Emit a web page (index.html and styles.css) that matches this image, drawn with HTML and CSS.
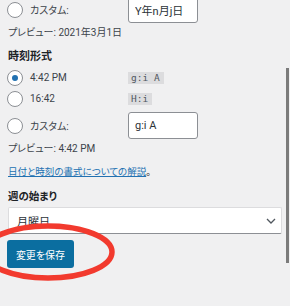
FILE: index.html
```html
<!DOCTYPE html>
<html lang="ja">
<head>
  <meta charset="UTF-8">
  <meta name="viewport" content="width=device-width, initial-scale=1.0">
  <title>一般設定</title>
  <link rel="stylesheet" href="styles.css">
</head>
<body>
  <div class="wrap">
    <div class="opt">
      <label class="choice"><span class="radio"></span>カスタム:</label>
      <input class="custom" type="text" value="Y年n月j日">
    </div>
    <p class="preview">プレビュー: 2021年3月1日</p>

    <h2 class="legend">時刻形式</h2>
    <div class="opt first">
      <label class="choice"><span class="radio checked"></span>4:42 PM</label>
      <code>g:i A</code>
    </div>
    <div class="opt">
      <label class="choice"><span class="radio"></span>16:42</label>
      <code>H:i</code>
    </div>
    <div class="opt custom-row">
      <label class="choice"><span class="radio"></span>カスタム:</label>
      <input class="custom" type="text" value="g:i A">
    </div>
    <p class="preview">プレビュー: 4:42 PM</p>

    <p class="doc"><a href="#">日付と時刻の書式についての解説</a>。</p>

    <h2 class="legend week">週の始まり</h2>
    <div class="select">
      <span>月曜日</span>
      <svg width="10" height="6" viewBox="0 0 10 6"><path d="M1 1l4 4 4-4" fill="none" stroke="#50575e" stroke-width="1.3"/></svg>
    </div>

    <button class="save">変更を保存</button>
  </div>

  <!-- annotation + scrollbar overlays -->
  <svg class="mark" width="150" height="70" viewBox="0 0 150 70">
    <ellipse cx="73" cy="34" rx="64" ry="26" fill="none" stroke="#f23a2e" stroke-width="5.5"/>
  </svg>
  <div class="scrollbar"></div>
</body>
</html>
```

FILE: styles.css
```css
* {
  box-sizing: border-box;
}
body {
  margin: 0;
  background-color: #f0f0f1;
  font-family: Roboto, "Noto Sans CJK JP", sans-serif;
  font-size: 10px;
  font-feature-settings: "palt";
  color: #1d2327;
  overflow: hidden;
  height: 306px;
  position: relative;
}
.wrap {
  margin-top: -4px;
  padding: 0 8px 0 7px;
}
.opt {
  display: grid;
  grid-template-columns: 121px auto;
  align-items: center;
  height: 21px;
}
.opt:first-child,
.custom-row {
  height: 27px;
}
.custom-row {
  margin-top: 3px;
}
.choice {
  display: flex;
  align-items: center;
  gap: 7px;
  color: #3c434a;
  font-size: 10px;
}
.radio {
  width: 16px;
  height: 16px;
  border: 1px solid #8c8f94;
  border-radius: 50%;
  background-color: #fff;
  display: flex;
  align-items: center;
  justify-content: center;
}
.radio.checked::after {
  content: "";
  width: 6px;
  height: 6px;
  border-radius: 50%;
  background-color: #2271b1;
}
input.custom {
  width: 70px;
  height: 27px;
  padding: 0 6px;
  border: 1px solid #8c8f94;
  border-radius: 3px;
  background-color: #fff;
  font-family: Roboto, "Noto Sans CJK JP", sans-serif;
  font-size: 11px;
  color: #2c3338;
}
code {
  justify-self: start;
  padding: 1px 4px 1px 3px;
  background-color: #dcdcde;
  font-family: "DejaVu Sans Mono", monospace;
  font-size: 9.5px;
  line-height: 10px;
  color: #50575e;
}
.preview {
  margin: 0 0 0 1px;
  line-height: 20px;
  font-size: 10px;
  color: #3c434a;
}
.legend {
  margin: 4px 0 0 1px;
  font-size: 11px;
  font-weight: 700;
  line-height: 20px;
}
.legend.week {
  margin-top: 5px;
  font-size: 10.5px;
}
.doc {
  margin: 3px 0 0 1px;
  line-height: 20px;
  font-size: 9.5px;
}
.doc a {
  color: #2271b1;
}
.select {
  margin-left: 1px;
  height: 27px;
  display: flex;
  align-items: center;
  justify-content: space-between;
  padding: 0 5px 0 8px;
  background-color: #fff;
  border: 1px solid #dcdcde;
  border-bottom-color: #8c8f94;
  border-radius: 2px;
  font-size: 11px;
  color: #2c3338;
}
.save {
  margin-top: 6px;
  width: 67px;
  height: 28px;
  border: 0;
  border-radius: 3px;
  background-color: #0b6ea0;
  color: #fff;
  font-family: Roboto, "Noto Sans CJK JP", sans-serif;
  font-size: 10px;
  font-feature-settings: "palt";
}
.mark {
  position: absolute;
  left: -25px;
  top: 218px;
}
.scrollbar {
  position: absolute;
  left: 286px;
  top: 68px;
  width: 3px;
  height: 195px;
  background-color: #7b7b7b;
}
```
